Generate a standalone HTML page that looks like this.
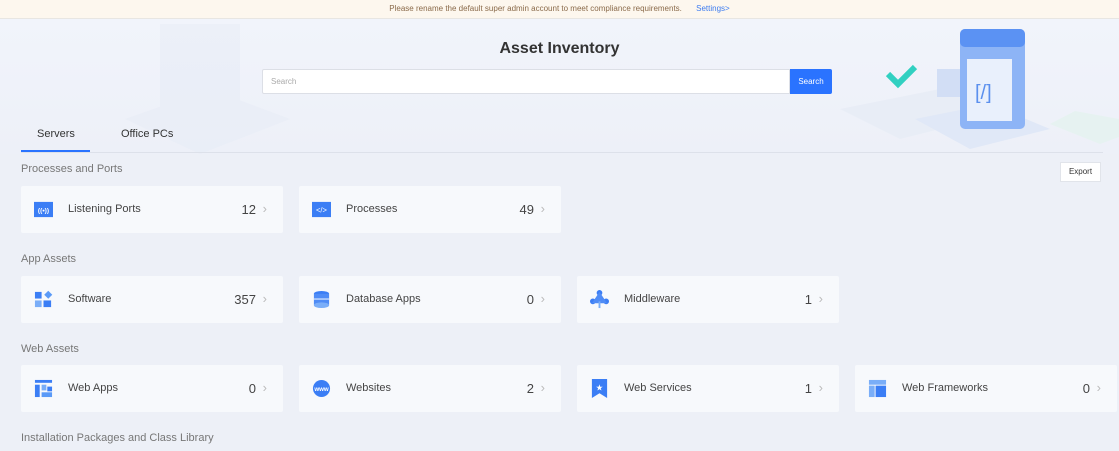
<!DOCTYPE html>
<html><head><meta charset="utf-8"><style>
*{margin:0;padding:0;box-sizing:border-box}
body{width:1119px;height:451px;overflow:hidden;background:#edf0f7;font-family:"Liberation Sans",sans-serif;position:relative}
.banner{position:absolute;left:0;top:0;width:1119px;height:19px;background:#fdf7ee;border-bottom:1px solid #e8e6e2;font-size:8px;color:#8a6a4a;text-align:center;line-height:17px}
.banner a{color:#3d7cf0;margin-left:12px}
.hero{position:absolute;left:0;top:19px;width:1119px;height:135px;background:linear-gradient(180deg,#f1f4fb,#edf0f8)}
.title{position:absolute;top:40px;left:0;width:1119px;text-align:center;font-size:16px;font-weight:bold;color:#333}
.search{position:absolute;left:262px;top:69px;width:528px;height:25px;background:#fff;border:1px solid #dcdfe6;border-radius:2px 0 0 2px;font-size:8px;color:#aaa;padding:7px 8px}
.sbtn{position:absolute;left:790px;top:69px;width:42px;height:25px;background:#2a73ff;color:#fff;font-size:8px;text-align:center;line-height:25px;border-radius:0 2px 2px 0}
.tab{position:absolute;top:128px;font-size:11px;color:#333}
.line{position:absolute;left:21px;top:152px;width:1082px;height:1px;background:#dde1ea}
.ul{position:absolute;left:21px;top:150px;width:69px;height:2px;background:#2a73ff}
.sec{position:absolute;left:21px;font-size:11px;color:#777}
.export{position:absolute;left:1060px;top:162px;width:41px;height:20px;background:#fff;border:1px solid #e1e4ea;font-size:8px;color:#333;text-align:center;line-height:18px}
.card{position:absolute;width:262px;height:47px;background:#f7f9fc;border-radius:2px}
.card .ic{position:absolute;left:13px;top:14px;width:19px;height:19px}
.card .lb{position:absolute;left:47px;top:17px;font-size:11px;color:#444}
.card .n{position:absolute;right:27px;top:16px;font-size:13px;color:#444}
.card .ch{position:absolute;right:16px;top:15px;font-size:13px;color:#bbb}
</style></head><body>
<div class="banner">Please rename the default super admin account to meet compliance requirements. <a>Settings&gt;</a></div>
<div class="hero">
<svg width="1119" height="135" style="position:absolute;left:0;top:0">
<g opacity="0.25" fill="#dfe6f3"><rect x="160" y="5" width="80" height="90"/><polygon points="125,100 200,135 290,100 210,70"/></g>
<polygon points="840,90 900,120 1000,95 940,70" fill="#e8edf6"/>
<rect x="850" y="20" width="50" height="60" rx="4" fill="#c3d6f8" transform="skewY(8)"/>
<polyline points="888,55 898,65 915,48" stroke="#31d0c1" stroke-width="6" fill="none"/>
<polygon points="915,100 970,130 1050,110 990,85" fill="#e0e8f7"/>
<rect x="937" y="50" width="30" height="28" fill="#d2def5"/>
<rect x="960" y="10" width="65" height="100" rx="5" fill="#8db4f6"/>
<rect x="960" y="10" width="65" height="18" rx="5" fill="#5b92f3"/>
<rect x="967" y="40" width="45" height="62" fill="#e9f0fc"/>
<text x="975" y="80" font-size="20" fill="#5b90ee" font-family="Liberation Sans">[/]</text>
<polygon points="1050,105 1100,125 1119,118 1119,100 1075,92" fill="#e6f2f1"/>
</svg>
</div>
<div class="title">Asset Inventory</div>
<div class="search">Search</div><div class="sbtn">Search</div>
<div class="tab" style="left:37px">Servers</div><div class="tab" style="left:121px">Office PCs</div>
<div class="line"></div><div class="ul"></div>
<div class="sec" style="top:163px">Processes and Ports</div>
<div class="export">Export</div>
<div class="sec" style="top:253px">App Assets</div>
<div class="sec" style="top:343px">Web Assets</div>
<div class="sec" style="top:432px">Installation Packages and Class Library</div>

<div class="card" style="left:21px;top:186px"><svg class="ic" viewBox="0 0 20 20"><rect y="2" width="20" height="16" fill="#3b7ef5"/><text x="10" y="13" font-size="7" fill="#fff" text-anchor="middle" font-family="Liberation Sans" font-weight="bold">((•))</text></svg><div class="lb">Listening Ports</div><div class="n">12</div><div class="ch">›</div></div>
<div class="card" style="left:299px;top:186px"><svg class="ic" viewBox="0 0 20 20"><rect y="2" width="20" height="16" fill="#3b7ef5"/><text x="10" y="13" font-size="8" fill="#fff" text-anchor="middle" font-family="Liberation Sans">&lt;/&gt;</text></svg><div class="lb">Processes</div><div class="n">49</div><div class="ch">›</div></div>

<div class="card" style="left:21px;top:276px"><svg class="ic" viewBox="0 0 20 20"><rect x="1" y="2" width="7" height="7" fill="#3b7ef5"/><rect x="12" y="2" width="6" height="6" fill="#5a9af7" transform="rotate(45 15 5)"/><rect x="1" y="11" width="7" height="7" fill="#7aaef8"/><rect x="10" y="11" width="8" height="7" fill="#3b7ef5"/></svg><div class="lb">Software</div><div class="n">357</div><div class="ch">›</div></div>
<div class="card" style="left:299px;top:276px"><svg class="ic" viewBox="0 0 20 20"><ellipse cx="10" cy="4" rx="8" ry="3" fill="#3b7ef5"/><rect x="2" y="4" width="16" height="12" fill="#4f8cf6"/><ellipse cx="10" cy="16" rx="8" ry="3" fill="#7aaef8"/><rect x="2" y="9" width="16" height="1" fill="#fff"/></svg><div class="lb">Database Apps</div><div class="n">0</div><div class="ch">›</div></div>
<div class="card" style="left:577px;top:276px"><svg class="ic" viewBox="0 0 20 20"><circle cx="10" cy="3" r="3" fill="#3b7ef5"/><circle cx="3" cy="12" r="3" fill="#3b7ef5"/><circle cx="17" cy="12" r="3" fill="#3b7ef5"/><polygon points="10,2 2,14 18,14" fill="#4f8cf6"/><rect x="9" y="12" width="2" height="7" fill="#7aaef8"/></svg><div class="lb">Middleware</div><div class="n">1</div><div class="ch">›</div></div>

<div class="card" style="left:21px;top:365px"><svg class="ic" viewBox="0 0 20 20"><rect x="1" y="1" width="18" height="3" fill="#3b7ef5"/><rect x="1" y="6" width="5" height="13" fill="#3b7ef5"/><rect x="8" y="6" width="5" height="6" fill="#7aaef8"/><rect x="14" y="8" width="5" height="5" fill="#3b7ef5"/><rect x="8" y="14" width="11" height="5" fill="#5a9af7"/></svg><div class="lb">Web Apps</div><div class="n">0</div><div class="ch">›</div></div>
<div class="card" style="left:299px;top:365px"><svg class="ic" viewBox="0 0 20 20"><circle cx="10" cy="10" r="9" fill="#3b7ef5"/><text x="10" y="12.5" font-size="6.5" fill="#fff" text-anchor="middle" font-family="Liberation Sans" font-weight="bold">www</text></svg><div class="lb">Websites</div><div class="n">2</div><div class="ch">›</div></div>
<div class="card" style="left:577px;top:365px"><svg class="ic" viewBox="0 0 20 20"><polygon points="2,0 18,0 18,20 10,15 2,20" fill="#3b7ef5"/><text x="10" y="12" font-size="9" fill="#fff" text-anchor="middle">★</text></svg><div class="lb">Web Services</div><div class="n">1</div><div class="ch">›</div></div>
<div class="card" style="left:855px;top:365px"><svg class="ic" viewBox="0 0 20 20"><rect x="1" y="1" width="18" height="5" fill="#7aaef8"/><rect x="1" y="7" width="6" height="12" fill="#7aaef8"/><rect x="8" y="7" width="11" height="12" fill="#3b7ef5"/></svg><div class="lb">Web Frameworks</div><div class="n">0</div><div class="ch">›</div></div>
</body></html>
